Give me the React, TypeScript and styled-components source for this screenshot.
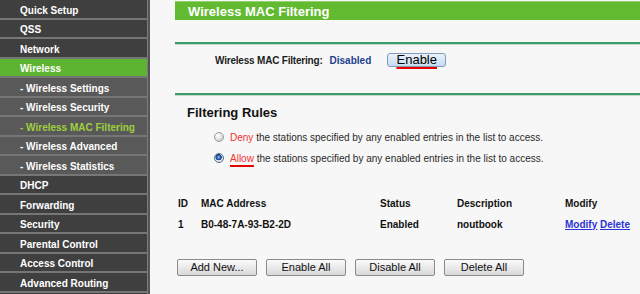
import styled, { createGlobalStyle } from "styled-components";

const GlobalStyle = createGlobalStyle`
  html, body {
    margin: 0;
    padding: 0;
    background: #f7f7f7;
    font-family: "Liberation Sans", Arial, sans-serif;
  }
`;

type MenuItem = { label: string; sub?: boolean; active?: boolean; current?: boolean };

const menu: MenuItem[] = [
  { label: "Quick Setup" },
  { label: "QSS" },
  { label: "Network" },
  { label: "Wireless", active: true },
  { label: "- Wireless Settings", sub: true },
  { label: "- Wireless Security", sub: true },
  { label: "- Wireless MAC Filtering", sub: true, current: true },
  { label: "- Wireless Advanced", sub: true },
  { label: "- Wireless Statistics", sub: true },
  { label: "DHCP" },
  { label: "Forwarding" },
  { label: "Security" },
  { label: "Parental Control" },
  { label: "Access Control" },
  { label: "Advanced Routing" },
];

export default function App() {
  return (
    <>
      <GlobalStyle />
      <Page>
        <Sidebar>
          {menu.map((m) => (
            <MenuRow key={m.label} $sub={m.sub} $active={m.active} $current={m.current}>
              {m.label}
            </MenuRow>
          ))}
        </Sidebar>
        <Main>
          <TitleBar>Wireless MAC Filtering</TitleBar>
          <Divider $top={22} />
          <StatusRow>
            <Label>Wireless MAC Filtering:</Label>
            <StatusValue>Disabled</StatusValue>
            <EnableButton>
              <Marked>Enable</Marked>
            </EnableButton>
          </StatusRow>
          <Divider $top={0} />
          <SectionTitle>Filtering Rules</SectionTitle>
          <RadioList>
            <RadioRow>
              <Radio />
              <RadioText>
                <Red>Deny</Red> the stations specified by any enabled entries in the list to access.
              </RadioText>
            </RadioRow>
            <RadioRow>
              <Radio $checked />
              <RadioText>
                <Red $marked>Allow</Red> the stations specified by any enabled entries in the list to access.
              </RadioText>
            </RadioRow>
          </RadioList>
          <Table>
            <Cell>ID</Cell>
            <Cell>MAC Address</Cell>
            <Cell>Status</Cell>
            <Cell>Description</Cell>
            <Cell>Modify</Cell>
            <Cell>1</Cell>
            <Cell>B0-48-7A-93-B2-2D</Cell>
            <Cell>Enabled</Cell>
            <Cell>noutbook</Cell>
            <Cell>
              <TableLink href="#">Modify</TableLink> <TableLink href="#">Delete</TableLink>
            </Cell>
          </Table>
          <ButtonRow>
            <GrayButton>Add New...</GrayButton>
            <GrayButton>Enable All</GrayButton>
            <GrayButton>Disable All</GrayButton>
            <GrayButton>Delete All</GrayButton>
          </ButtonRow>
        </Main>
      </Page>
    </>
  );
}

const Page = styled.div`
  display: flex;
  width: 640px;
  height: 294px;
  overflow: hidden;
  background: #f7f7f7;
`;

const Sidebar = styled.div`
  width: 147px;
  flex-shrink: 0;
  border-right: 1px solid #7c7c7c;
  box-shadow: 2px 0 0 #555;
  margin-right: 2px;
  background: #3f3f3f;
`;

const MenuRow = styled.div<{ $sub?: boolean; $active?: boolean; $current?: boolean }>`
  box-sizing: border-box;
  height: 19.5px;
  padding: 2.5px 0 0 20px;
  border-bottom: 2px solid #767676;
  line-height: 15px;
  font-size: 10px;
  font-weight: bold;
  white-space: nowrap;
  background: ${(p) => (p.$active ? "#5db431" : p.$sub ? "#595959" : "#3f3f3f")};
  color: ${(p) => (p.$current ? "#9fcf3e" : "#ffffff")};
`;

const Main = styled.div`
  flex: 1;
  padding-left: 25px;
  display: flex;
  flex-direction: column;
`;

const TitleBar = styled.div`
  margin-top: 1px;
  height: 18px;
  border-top: 1px solid #93d06e;
  background: #62ba31;
  color: #fff;
  font-size: 13px;
  font-weight: bold;
  line-height: 19px;
  padding-left: 13px;
`;

const Divider = styled.div<{ $top: number }>`
  margin-top: ${(p) => p.$top}px;
  height: 2px;
  background: #3f9a6c;
  border-bottom: 1px solid #c5d9cb;
`;

const StatusRow = styled.div`
  box-sizing: border-box;
  height: 48px;
  padding: 8px 0 0 40px;
  display: flex;
  align-items: flex-start;
`;

const Label = styled.span`
  font-size: 10px;
  font-weight: bold;
  color: #1c1c1c;
  line-height: 14px;
  padding-top: 1px;
  letter-spacing: -0.2px;
`;

const StatusValue = styled.span`
  margin-left: 7px;
  font-size: 10px;
  font-weight: bold;
  color: #213f8c;
  line-height: 14px;
  padding-top: 1px;
`;

const EnableButton = styled.button`
  margin-left: 16px;
  width: 59px;
  height: 14px;
  padding: 0;
  border: 1px solid #7f9db9;
  border-radius: 3px;
  background: linear-gradient(#eaf2fc, #c7dbf1);
  font-family: "Liberation Sans", Arial, sans-serif;
  font-size: 13px;
  line-height: 12px;
  color: #000;
  overflow: visible;
`;

const Marked = styled.span`
  text-decoration: underline;
  text-decoration-color: #e60000;
  text-decoration-thickness: 2px;
  text-underline-offset: 3px;
`;

const SectionTitle = styled.div`
  margin-top: 9px;
  padding-left: 12px;
  font-size: 13px;
  font-weight: bold;
  line-height: 16px;
  color: #111;
`;

const RadioList = styled.div`
  margin-top: 5.5px;
  padding-left: 39px;
`;

const RadioRow = styled.div`
  height: 21px;
  display: flex;
  align-items: center;
`;

const Radio = styled.span<{ $checked?: boolean }>`
  box-sizing: border-box;
  width: 10px;
  height: 10px;
  border-radius: 50%;
  border: 1px solid ${(p) => (p.$checked ? "#5b6e88" : "#9a9a9a")};
  background: ${(p) =>
    p.$checked
      ? "radial-gradient(circle at 45% 40%, #9cc4f0 0, #2c63b8 28%, #173e80 45%, #e9ecef 52%, #c9ced4 100%)"
      : "radial-gradient(circle at 35% 30%, #ffffff 0, #e6e6e6 45%, #bdbdbd 100%)"};
`;

const RadioText = styled.span`
  margin-left: 6px;
  font-size: 10px;
  color: #2a2a2a;
  white-space: nowrap;
`;

const Red = styled.span<{ $marked?: boolean }>`
  color: #f23232;
  text-decoration: ${(p) => (p.$marked ? "underline" : "none")};
  text-decoration-color: #e60000;
  text-decoration-thickness: 2px;
  text-underline-offset: 3px;
`;

const Table = styled.div`
  margin-top: 24px;
  padding-left: 3px;
  display: grid;
  grid-template-columns: 23px 179px 77px 108px auto;
  grid-auto-rows: 21px;
  align-items: center;
`;

const Cell = styled.div`
  font-size: 10px;
  font-weight: bold;
  color: #111;
  white-space: nowrap;
`;

const TableLink = styled.a`
  color: #2b33d6;
  text-decoration: underline;
`;

const ButtonRow = styled.div`
  margin-top: 24.5px;
  padding-left: 2px;
  display: flex;
  gap: 9px;
`;

const GrayButton = styled.button`
  width: 80px;
  height: 17px;
  padding: 0;
  border: 1px solid #8a8a8a;
  border-radius: 2px;
  background: linear-gradient(#fbfbfb, #e9e9e9 50%, #d9d9d9);
  font-family: "Liberation Sans", Arial, sans-serif;
  font-size: 11px;
  line-height: 15px;
  color: #111;
`;
